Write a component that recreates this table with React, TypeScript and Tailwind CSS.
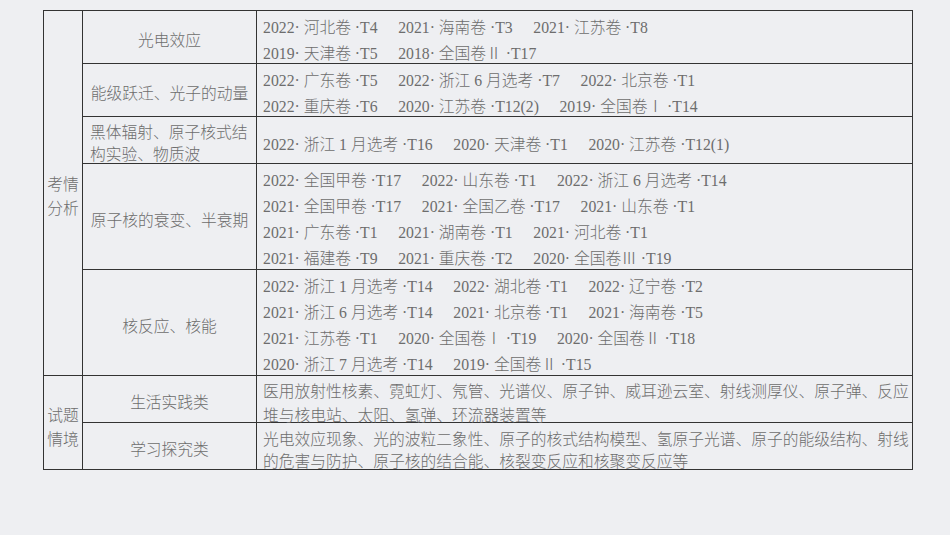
import React from "react";

type Row = {
  label: React.ReactNode;
  labelClass: string;
  lines: string[][];
  dataClass: string;
  rowStart: string;
  bb: boolean;
};

const rows: Row[] = [
  {
    label: "光电效应",
    labelClass: "items-center justify-center text-center pt-[8px] leading-[24px]",
    lines: [
      ["2022· 河北卷 ·T4", "2021· 海南卷 ·T3", "2021· 江苏卷 ·T8"],
      ["2019· 天津卷 ·T5", "2018· 全国卷Ⅱ ·T17"],
    ],
    dataClass: "pt-[4px] leading-[26px]",
    rowStart: "row-start-1",
    bb: true,
  },
  {
    label: "能级跃迁、光子的动量",
    labelClass: "items-center justify-center text-center pt-[8px] leading-[24px]",
    lines: [
      ["2022· 广东卷 ·T5", "2022· 浙江 6 月选考 ·T7", "2022· 北京卷 ·T1"],
      ["2022· 重庆卷 ·T6", "2020· 江苏卷 ·T12(2)", "2019· 全国卷Ⅰ ·T14"],
    ],
    dataClass: "pt-[4px] leading-[26px]",
    rowStart: "row-start-2",
    bb: true,
  },
  {
    label: (
      <div>
        <div>黑体辐射、原子核式结</div>
        <div>构实验、物质波</div>
      </div>
    ),
    labelClass: "items-start justify-start text-left pt-[5px] leading-[22px]",
    lines: [["2022· 浙江 1 月选考 ·T16", "2020· 天津卷 ·T1", "2020· 江苏卷 ·T12(1)"]],
    dataClass: "pt-[15px] leading-[26px]",
    rowStart: "row-start-3",
    bb: true,
  },
  {
    label: "原子核的衰变、半衰期",
    labelClass: "items-center justify-center text-center pt-[9px] leading-[24px]",
    lines: [
      ["2022· 全国甲卷 ·T17", "2022· 山东卷 ·T1", "2022· 浙江 6 月选考 ·T14"],
      ["2021· 全国甲卷 ·T17", "2021· 全国乙卷 ·T17", "2021· 山东卷 ·T1"],
      ["2021· 广东卷 ·T1", "2021· 湖南卷 ·T1", "2021· 河北卷 ·T1"],
      ["2021· 福建卷 ·T9", "2021· 重庆卷 ·T2", "2020· 全国卷Ⅲ ·T19"],
    ],
    dataClass: "pt-[4px] leading-[26px]",
    rowStart: "row-start-4",
    bb: true,
  },
  {
    label: "核反应、核能",
    labelClass: "items-center justify-center text-center pt-[8px] leading-[24px]",
    lines: [
      ["2022· 浙江 1 月选考 ·T14", "2022· 湖北卷 ·T1", "2022· 辽宁卷 ·T2"],
      ["2021· 浙江 6 月选考 ·T14", "2021· 北京卷 ·T1", "2021· 海南卷 ·T5"],
      ["2021· 江苏卷 ·T1", "2020· 全国卷Ⅰ ·T19", "2020· 全国卷Ⅱ ·T18"],
      ["2020· 浙江 7 月选考 ·T14", "2019· 全国卷Ⅱ ·T15"],
    ],
    dataClass: "pt-[4px] leading-[26px]",
    rowStart: "row-start-5",
    bb: true,
  },
  {
    label: "生活实践类",
    labelClass: "items-center justify-center text-center pt-[8px] leading-[24px]",
    lines: [
      ["医用放射性核素、霓虹灯、氖管、光谱仪、原子钟、威耳逊云室、射线测厚仪、原子弹、反应"],
      ["堆与核电站、太阳、氢弹、环流器装置等"],
    ],
    dataClass: "pt-[4px] leading-[24px]",
    rowStart: "row-start-6",
    bb: true,
  },
  {
    label: "学习探究类",
    labelClass: "items-center justify-center text-center pt-[8px] leading-[24px]",
    lines: [
      ["光电效应现象、光的波粒二象性、原子的核式结构模型、氢原子光谱、原子的能级结构、射线"],
      ["的危害与防护、原子核的结合能、核裂变反应和核聚变反应等"],
    ],
    dataClass: "pt-[6px] leading-[22px]",
    rowStart: "row-start-7",
    bb: false,
  },
];

export default function App() {
  return (
    <div
      className="w-[950px] h-[535px] bg-[#eeeff2] overflow-hidden text-[#6d6d6d] text-[15.75px] font-light"
      style={{ fontFamily: '"Liberation Serif", "Noto Sans CJK SC", serif' }}
    >
      <div className="ml-[43px] mt-[10px] w-[870px] border border-[#333333] grid grid-cols-[39px_174px_655px] grid-rows-[53px_53px_47px_106px_106px_47px_46px]">
        <div className="col-start-1 row-start-1 row-span-5 border-r border-b border-[#333333] flex items-center justify-center text-center pt-[7px] leading-[24px]">
          <div>
            <div>考情</div>
            <div>分析</div>
          </div>
        </div>
        <div className="col-start-1 row-start-6 row-span-2 border-r border-[#333333] flex items-center justify-center text-center pt-[10px] leading-[24px]">
          <div>
            <div>试题</div>
            <div>情境</div>
          </div>
        </div>
        {rows.map((r, i) => (
          <React.Fragment key={i}>
            <div
              className={`col-start-2 ${r.rowStart} border-r border-[#333333] ${r.bb ? "border-b" : ""} flex px-[7px] whitespace-nowrap ${r.labelClass}`}
            >
              {r.label}
            </div>
            <div
              className={`col-start-3 ${r.rowStart} border-[#333333] ${r.bb ? "border-b" : ""} pl-[6px] ${r.dataClass}`}
            >
              {r.lines.map((l, j) => (
                <div key={j} className="whitespace-pre flex gap-x-[20.5px]">
                  {l.map((e, k) => (
                    <span key={k}>{e}</span>
                  ))}
                </div>
              ))}
            </div>
          </React.Fragment>
        ))}
      </div>
    </div>
  );
}
